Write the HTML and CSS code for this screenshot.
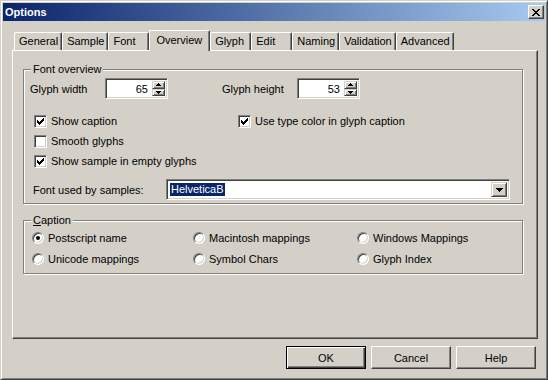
FILE: index.html
```html
<!DOCTYPE html>
<html>
<head>
<meta charset="utf-8">
<title>Options</title>
<link rel="stylesheet" href="styles.css">
</head>
<body>
<div class="window">
  <div class="titlebar">
    <span class="title">Options</span>
    <span class="close">
      <svg width="8" height="7" viewBox="0 0 8 7" shape-rendering="crispEdges"><path d="M0 0h2v1H0zM6 0h2v1H6zM1 1h2v1H1zM5 1h2v1H5zM2 2h4v1H2zM3 3h2v1H3zM2 4h4v1H2zM1 5h2v1H1zM5 5h2v1H5zM0 6h2v1H0zM6 6h2v1H6z" fill="#000"/></svg>
    </span>
  </div>
  <div class="content">
    <div class="tabs">
      <div class="tab">General</div>
      <div class="tab">Sample</div>
      <div class="tab">Font</div>
      <div class="tab selected">Overview</div>
      <div class="tab">Glyph</div>
      <div class="tab">Edit</div>
      <div class="tab">Naming</div>
      <div class="tab">Validation</div>
      <div class="tab">Advanced</div>
    </div>
    <div class="panel">
      <fieldset class="group overview">
        <legend>Font overview</legend>
        <div class="sizes">
          <div class="field">
            <span class="lbl">Glyph width</span>
            <span class="spin">
              <span class="spin-val">65</span>
              <span class="spin-btns">
                <span class="sb"><svg width="5" height="3" viewBox="0 0 5 3" shape-rendering="crispEdges"><path d="M2 0h1v1H2zM1 1h3v1H1zM0 2h5v1H0z" fill="#000"/></svg></span>
                <span class="sb"><svg width="5" height="3" viewBox="0 0 5 3" shape-rendering="crispEdges"><path d="M0 0h5v1H0zM1 1h3v1H1zM2 2h1v1H2z" fill="#000"/></svg></span>
              </span>
            </span>
          </div>
          <div class="field">
            <span class="lbl">Glyph height</span>
            <span class="spin">
              <span class="spin-val">53</span>
              <span class="spin-btns">
                <span class="sb"><svg width="5" height="3" viewBox="0 0 5 3" shape-rendering="crispEdges"><path d="M2 0h1v1H2zM1 1h3v1H1zM0 2h5v1H0z" fill="#000"/></svg></span>
                <span class="sb"><svg width="5" height="3" viewBox="0 0 5 3" shape-rendering="crispEdges"><path d="M0 0h5v1H0zM1 1h3v1H1zM2 2h1v1H2z" fill="#000"/></svg></span>
              </span>
            </span>
          </div>
        </div>
        <div class="checks">
          <div class="col col-left">
            <div class="check">
              <span class="box"><svg width="7" height="7" viewBox="0 0 7 7" shape-rendering="crispEdges"><path d="M0 2h1v3H0zM1 3h1v3H1zM2 4h1v3H2zM3 3h1v3H3zM4 2h1v3H4zM5 1h1v3H5zM6 0h1v3H6z" fill="#000"/></svg></span>
              <span>Show caption</span>
            </div>
            <div class="check">
              <span class="box"></span>
              <span>Smooth glyphs</span>
            </div>
            <div class="check">
              <span class="box"><svg width="7" height="7" viewBox="0 0 7 7" shape-rendering="crispEdges"><path d="M0 2h1v3H0zM1 3h1v3H1zM2 4h1v3H2zM3 3h1v3H3zM4 2h1v3H4zM5 1h1v3H5zM6 0h1v3H6z" fill="#000"/></svg></span>
              <span>Show sample in empty glyphs</span>
            </div>
          </div>
          <div class="col">
            <div class="check">
              <span class="box"><svg width="7" height="7" viewBox="0 0 7 7" shape-rendering="crispEdges"><path d="M0 2h1v3H0zM1 3h1v3H1zM2 4h1v3H2zM3 3h1v3H3zM4 2h1v3H4zM5 1h1v3H5zM6 0h1v3H6z" fill="#000"/></svg></span>
              <span>Use type color in glyph caption</span>
            </div>
          </div>
        </div>
        <div class="font-row">
          <span class="font-lbl">Font used by samples:</span>
          <span class="combo">
            <span class="combo-val"><span class="sel">HelveticaB</span></span>
            <span class="combo-btn"><svg width="7" height="4" viewBox="0 0 7 4" shape-rendering="crispEdges"><path d="M0 0h7v1H0zM1 1h5v1H1zM2 2h3v1H2zM3 3h1v1H3z" fill="#000"/></svg></span>
          </span>
        </div>
      </fieldset>
      <fieldset class="group caption">
        <legend><u>C</u>aption</legend>
        <div class="radios">
          <div class="radio"><span class="circle on"></span><span>Postscript name</span></div>
          <div class="radio"><span class="circle"></span><span>Macintosh mappings</span></div>
          <div class="radio"><span class="circle"></span><span>Windows Mappings</span></div>
          <div class="radio"><span class="circle"></span><span>Unicode mappings</span></div>
          <div class="radio"><span class="circle"></span><span>Symbol Chars</span></div>
          <div class="radio"><span class="circle"></span><span>Glyph Index</span></div>
        </div>
      </fieldset>
    </div>
    <div class="buttons">
      <span class="btn default">OK</span>
      <span class="btn">Cancel</span>
      <span class="btn">Help</span>
    </div>
  </div>
</div>
</body>
</html>
```

FILE: styles.css
```css
* { box-sizing: border-box; }
html, body { margin: 0; padding: 0; }
body {
  width: 548px;
  height: 380px;
  overflow: hidden;
  background: #d4d0c8;
  color: #000;
  font-family: "Liberation Sans", Arial, sans-serif;
  font-size: 11px;
}
.window {
  width: 548px;
  height: 380px;
  background: #d4d0c8;
  border: 1px solid;
  border-color: #d4d0c8 #404040 #404040 #d4d0c8;
  box-shadow: inset 1px 1px 0 #fff, inset -1px -1px 0 #808080;
  padding: 2px;
  display: flex;
  flex-direction: column;
}
.titlebar {
  height: 18px;
  display: flex;
  align-items: center;
  justify-content: space-between;
  padding: 0 1px 0 2px;
  background: linear-gradient(to right, #0a246a, #a6caf0);
}
.title {
  color: #fff;
  font-weight: bold;
  font-size: 11px;
  line-height: 14px;
}
.close {
  width: 16px;
  height: 14px;
  display: flex;
  align-items: center;
  justify-content: center;
  background: #d4d0c8;
  border: 1px solid;
  border-color: #fff #404040 #404040 #fff;
  box-shadow: inset -1px -1px 0 #808080;
}
.content {
  flex: 1;
  display: flex;
  flex-direction: column;
  padding: 9px 7px 0 9px;
}
.tabs {
  display: flex;
  align-items: flex-end;
  height: 20px;
  padding-left: 2px;
}
.tab {
  height: 18px;
  min-width: 41px;
  padding: 0 3px 0 4px;
  line-height: 16px;
  border-top: 1px solid #fff;
  border-left: 1px solid #fff;
  border-right: 1px solid #404040;
  border-radius: 2px 2px 0 0;
  box-shadow: inset -1px 0 0 #808080;
  white-space: nowrap;
  background: #d4d0c8;
}
.tab.selected {
  height: 21px;
  margin-bottom: -1px;
  padding: 0 7px 0 6px;
  line-height: 18px;
  position: relative;
  z-index: 1;
}
.panel {
  height: 289px;
  border: 1px solid;
  border-color: #fff #404040 #404040 #fff;
  box-shadow: inset -1px -1px 0 #808080;
  padding: 12px 14px 0 10px;
}
.group {
  margin: 0;
  min-width: 0;
  padding: 0 6px 3px 6px;
  border: 1px solid #808080;
  box-shadow: inset 1px 1px 0 #fff, 1px 1px 0 #fff;
}
.group legend {
  margin-left: 1px;
  padding: 0 2px;
  line-height: 13px;
  background: #d4d0c8;
}
.sizes {
  display: flex;
  margin-top: 2px;
  height: 21px;
}
.field {
  display: flex;
  align-items: center;
  width: 192px;
}
.lbl {
  width: 75px;
  flex: none;
}
.spin {
  width: 63px;
  height: 21px;
  display: flex;
  background: #fff;
  border: 1px solid;
  border-color: #808080 #fff #fff #808080;
  box-shadow: inset 1px 1px 0 #404040, inset -1px -1px 0 #d4d0c8;
  padding: 2px 2px 2px 2px;
}
.spin-val {
  flex: 1;
  text-align: right;
  padding-right: 4px;
  line-height: 16px;
}
.spin-btns {
  width: 13px;
  display: flex;
  flex-direction: column;
}
.sb {
  flex: 1;
  display: flex;
  align-items: center;
  justify-content: center;
  background: #d4d0c8;
  border: 1px solid;
  border-color: #d4d0c8 #404040 #404040 #d4d0c8;
  box-shadow: inset 1px 1px 0 #fff, inset -1px -1px 0 #808080;
}
.checks {
  display: flex;
  margin-top: 12px;
}
.col-left {
  width: 204px;
}
.check {
  display: flex;
  align-items: center;
  gap: 4px;
  height: 20px;
  padding-left: 4px;
  white-space: nowrap;
}
.box {
  width: 13px;
  height: 13px;
  flex: none;
  display: flex;
  align-items: center;
  justify-content: center;
  background: #fff;
  border: 1px solid;
  border-color: #808080 #fff #fff #808080;
  box-shadow: inset 1px 1px 0 #404040, inset -1px -1px 0 #d4d0c8;
}
.font-row {
  display: flex;
  align-items: center;
  margin-top: 8px;
  padding-left: 3px;
}
.font-lbl {
  width: 133px;
  flex: none;
}
.combo {
  width: 344px;
  height: 21px;
  display: flex;
  background: #fff;
  border: 1px solid;
  border-color: #808080 #fff #fff #808080;
  box-shadow: inset 1px 1px 0 #404040, inset -1px -1px 0 #d4d0c8;
  padding: 2px;
}
.combo-val {
  flex: 1;
  padding-left: 1px;
  display: flex;
  align-items: center;
}
.sel {
  background: #0a246a;
  color: #fff;
  padding: 0 1px;
  line-height: 13px;
}
.combo-btn {
  width: 16px;
  display: flex;
  align-items: center;
  justify-content: center;
  background: #d4d0c8;
  border: 1px solid;
  border-color: #d4d0c8 #404040 #404040 #d4d0c8;
  box-shadow: inset 1px 1px 0 #fff, inset -1px -1px 0 #808080;
}
.caption {
  margin-top: 10px;
  padding-bottom: 4px;
}
.radios {
  display: grid;
  grid-template-columns: 161px 164px 1fr;
  padding-left: 2px;
}
.radio {
  display: flex;
  align-items: center;
  gap: 4px;
  height: 21px;
  white-space: nowrap;
}
.circle {
  width: 12px;
  height: 12px;
  flex: none;
  border-radius: 50%;
  background: #fff;
  border: 1px solid;
  border-color: #808080 #fff #fff #808080;
  box-shadow: inset 1px 1px 0 #404040, inset -1px -1px 0 #d4d0c8;
  display: flex;
  align-items: center;
  justify-content: center;
}
.circle.on::after {
  content: "";
  width: 4px;
  height: 4px;
  border-radius: 50%;
  background: #000;
}
.buttons {
  display: flex;
  justify-content: flex-end;
  gap: 5px;
  margin-top: 7px;
  padding-right: 2px;
}
.btn {
  width: 80px;
  height: 23px;
  display: flex;
  align-items: center;
  justify-content: center;
  background: #d4d0c8;
  border: 1px solid;
  border-color: #fff #404040 #404040 #fff;
  box-shadow: inset -1px -1px 0 #808080;
}
.btn.default {
  border: 1px solid #000;
  box-shadow: inset 1px 1px 0 #fff, inset -1px -1px 0 #404040, inset -2px -2px 0 #808080;
}
```
